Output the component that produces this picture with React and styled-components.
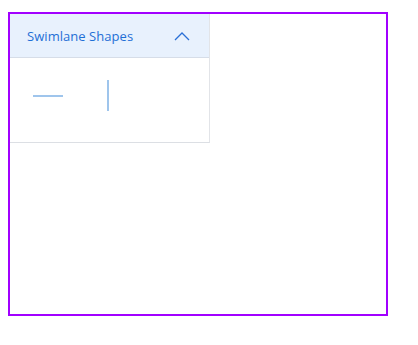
import React from "react";
import styled, { createGlobalStyle } from "styled-components";

const Global = createGlobalStyle`
  html, body { margin: 0; padding: 0; background: #ffffff; }
  body { padding: 12px 8px; font-family: "Open Sans", "Noto Sans", sans-serif; }
  * { box-sizing: border-box; }
`;

const Frame = styled.div`
  width: 380px;
  height: 304px;
  border: 2px solid #a100ff;
  display: flex;
  flex-direction: column;
  align-items: flex-start;
`;

const Panel = styled.section`
  width: 200px;
  background: #ffffff;
  border-right: 1px solid #e2e4e8;
  border-bottom: 1px solid #dcdfe4;
  display: flex;
  flex-direction: column;
`;

const Header = styled.div`
  height: 44px;
  background: #e8f1fd;
  border-bottom: 1px solid #d6dde8;
  display: flex;
  align-items: center;
  justify-content: space-between;
  padding: 0 19px 0 17px;
`;

const Title = styled.span`
  font-size: 13px;
  color: #1f6fd6;
  letter-spacing: 0.05px;
`;

const Body = styled.div`
  height: 84px;
  display: flex;
  align-items: center;
  padding: 0 0 9px 23px;
`;

const ShapeSlot = styled.div`
  width: ${(p) => p.$w}px;
  height: 40px;
  display: flex;
  align-items: center;
  justify-content: center;
`;

const Chevron = () => (
  <svg width="16" height="10" viewBox="0 0 16 10">
    <path d="M1 9 L8 2 L15 9" fill="none" stroke="#2a6fd6" strokeWidth="1.3" />
  </svg>
);

export default function App() {
  return (
    <>
      <Global />
      <Frame>
        <Panel>
          <Header>
            <Title>Swimlane Shapes</Title>
            <Chevron />
          </Header>
          <Body>
            <ShapeSlot $w={30}>
              <svg width="30" height="40" viewBox="0 0 30 40">
                <line x1="0" y1="20" x2="30" y2="20" stroke="#7fb2e6" strokeWidth="1.5" />
              </svg>
            </ShapeSlot>
            <ShapeSlot $w={90}>
              <svg width="4" height="32" viewBox="0 0 4 32">
                <line x1="2" y1="0" x2="2" y2="31" stroke="#7fb2e6" strokeWidth="1.5" />
              </svg>
            </ShapeSlot>
          </Body>
        </Panel>
      </Frame>
    </>
  );
}
